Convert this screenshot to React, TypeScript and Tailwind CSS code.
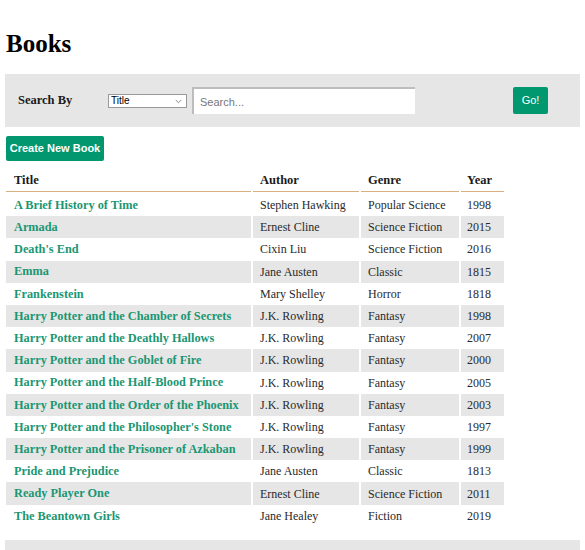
import { useState } from "react";

interface Book {
  title: string;
  author: string;
  genre: string;
  year: number;
}

const books: Book[] = [
  { title: "A Brief History of Time", author: "Stephen Hawking", genre: "Popular Science", year: 1998 },
  { title: "Armada", author: "Ernest Cline", genre: "Science Fiction", year: 2015 },
  { title: "Death's End", author: "Cixin Liu", genre: "Science Fiction", year: 2016 },
  { title: "Emma", author: "Jane Austen", genre: "Classic", year: 1815 },
  { title: "Frankenstein", author: "Mary Shelley", genre: "Horror", year: 1818 },
  { title: "Harry Potter and the Chamber of Secrets", author: "J.K. Rowling", genre: "Fantasy", year: 1998 },
  { title: "Harry Potter and the Deathly Hallows", author: "J.K. Rowling", genre: "Fantasy", year: 2007 },
  { title: "Harry Potter and the Goblet of Fire", author: "J.K. Rowling", genre: "Fantasy", year: 2000 },
  { title: "Harry Potter and the Half-Blood Prince", author: "J.K. Rowling", genre: "Fantasy", year: 2005 },
  { title: "Harry Potter and the Order of the Phoenix", author: "J.K. Rowling", genre: "Fantasy", year: 2003 },
  { title: "Harry Potter and the Philosopher's Stone", author: "J.K. Rowling", genre: "Fantasy", year: 1997 },
  { title: "Harry Potter and the Prisoner of Azkaban", author: "J.K. Rowling", genre: "Fantasy", year: 1999 },
  { title: "Pride and Prejudice", author: "Jane Austen", genre: "Classic", year: 1813 },
  { title: "Ready Player One", author: "Ernest Cline", genre: "Science Fiction", year: 2011 },
  { title: "The Beantown Girls", author: "Jane Healey", genre: "Fiction", year: 2019 },
];

const App = () => {
  const [searchBy, setSearchBy] = useState("title");
  const [query, setQuery] = useState("");

  return (
    <div className="px-[5px] text-[#1a1a1a] font-['Liberation_Serif',serif]">
      <h1 className="pt-[28px] pl-[1px] text-[25px] leading-[32px] font-bold text-black">Books</h1>

      <form
        onSubmit={(e) => e.preventDefault()}
        className="mt-[14px] h-[53px] bg-[#e6e6e6] flex items-center"
      >
        <label className="ml-[13px] w-[90px] text-[12.5px] font-bold">Search By</label>
        <div className="relative w-[79px] h-[14px]">
          <select
            value={searchBy}
            onChange={(e) => setSearchBy(e.target.value)}
            className="block appearance-none w-full h-full bg-white border border-[#999] text-[10px] leading-[10px] font-['Liberation_Sans',sans-serif] pl-[2px] py-0 text-black outline-none"
          >
            <option value="title">Title</option>
            <option value="author">Author</option>
            <option value="genre">Genre</option>
          </select>
          <svg
            className="absolute right-[5px] top-[5px] pointer-events-none"
            width="7"
            height="5"
            viewBox="0 0 7 5"
            fill="none"
          >
            <path d="M0.8 1 L3.5 3.7 L6.2 1" stroke="#8a8a8a" strokeWidth="1" />
          </svg>
        </div>
        <input
          value={query}
          onChange={(e) => setQuery(e.target.value)}
          placeholder="Search..."
          className="ml-[5px] w-[223px] h-[27px] bg-white border-t-2 border-l-2 border-[#bdbdbd] px-[6px] text-[11px] font-['Liberation_Sans',sans-serif] placeholder:text-[#777] outline-none"
        />
        <button
          type="submit"
          className="ml-[98px] w-[35px] h-[27px] rounded-[2px] bg-[#01986f] text-white text-[11px] font-['Liberation_Sans',sans-serif]"
        >
          Go!
        </button>
      </form>

      <button className="mt-[9px] ml-[1px] w-[98px] h-[25px] rounded-[2px] bg-[#02976f] text-white text-[11px] font-bold font-['Liberation_Sans',sans-serif]">
        Create New Book
      </button>

      <table className="mt-[9px] table-fixed border-separate border-spacing-x-[2px] border-spacing-y-0 -ml-[1px] text-[12px]">
        <thead>
          <tr className="h-[22px]">
            <th className="w-[245px] pl-[8px] text-left text-[12.5px] font-bold border-b border-[#d9b07f]">Title</th>
            <th className="w-[106px] pl-[7px] text-left text-[12.5px] font-bold border-b border-[#d9b07f]">Author</th>
            <th className="w-[98px] pl-[7px] text-left text-[12.5px] font-bold border-b border-[#d9b07f]">Genre</th>
            <th className="w-[43px] pl-[6px] text-left text-[12.5px] font-bold border-b border-[#d9b07f]">Year</th>
          </tr>
          <tr className="h-[2px]" />
        </thead>
        <tbody>
          {books.map((book, i) => (
            <tr key={book.title} className={i % 2 === 1 ? "h-[22.2px] bg-[#e6e6e6]" : "h-[22.2px]"}>
              <td className="pl-[8px] text-[12.3px] font-bold text-[#1b9673] whitespace-nowrap">{book.title}</td>
              <td className="pl-[7px] text-[#2a2a2a] whitespace-nowrap">{book.author}</td>
              <td className="pl-[7px] text-[#2a2a2a] whitespace-nowrap">{book.genre}</td>
              <td className="pl-[6px] text-[#2a2a2a]">{book.year}</td>
            </tr>
          ))}
        </tbody>
      </table>

      <div className="mt-[13px] h-[30px] bg-[#e6e6e6]" />
    </div>
  );
};

export default App;
